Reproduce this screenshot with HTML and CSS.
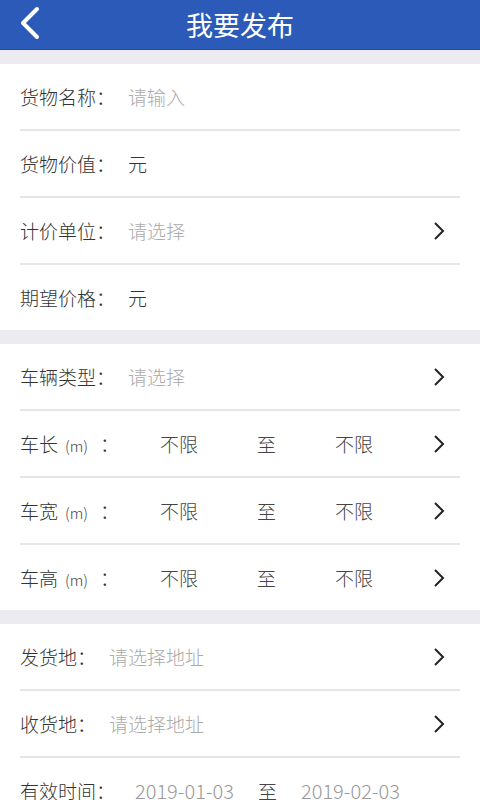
FILE: index.html
```html
<!DOCTYPE html>
<html>
<head>
    <meta charset="utf-8">
    <link rel="stylesheet" href="styles.css">
</head>
<body>
    <div class="header">
        <svg class="back" width="22" height="34" viewBox="0 0 22 34">
            <path d="M18 3 L4 17 L18 31" fill="none" stroke="#fff" stroke-width="4" stroke-linecap="round" stroke-linejoin="round"/>
        </svg>
        <h1>我要发布</h1>
    </div>

    <div class="gap"></div>

    <div class="section">
        <div class="row">
            <span class="label">货物名称：</span>
            <span class="value hint">请输入</span>
        </div>
        <div class="row">
            <span class="label">货物价值：</span>
            <span class="value">元</span>
        </div>
        <div class="row">
            <span class="label">计价单位：</span>
            <span class="value hint">请选择</span>
            <svg class="arrow" width="12" height="20" viewBox="0 0 12 20"><path d="M2 2 L10 10 L2 18" fill="none" stroke="#222" stroke-width="2"/></svg>
        </div>
        <div class="row">
            <span class="label">期望价格：</span>
            <span class="value">元</span>
        </div>
    </div>

    <div class="gap"></div>

    <div class="section">
        <div class="row">
            <span class="label">车辆类型：</span>
            <span class="value hint">请选择</span>
            <svg class="arrow" width="12" height="20" viewBox="0 0 12 20"><path d="M2 2 L10 10 L2 18" fill="none" stroke="#222" stroke-width="2"/></svg>
        </div>
        <div class="row range">
            <span class="label">车长<small>(m)</small>：</span>
            <span class="num">不限</span>
            <span class="to">至</span>
            <span class="num">不限</span>
            <svg class="arrow" width="12" height="20" viewBox="0 0 12 20"><path d="M2 2 L10 10 L2 18" fill="none" stroke="#222" stroke-width="2"/></svg>
        </div>
        <div class="row range">
            <span class="label">车宽<small>(m)</small>：</span>
            <span class="num">不限</span>
            <span class="to">至</span>
            <span class="num">不限</span>
            <svg class="arrow" width="12" height="20" viewBox="0 0 12 20"><path d="M2 2 L10 10 L2 18" fill="none" stroke="#222" stroke-width="2"/></svg>
        </div>
        <div class="row range">
            <span class="label">车高<small>(m)</small>：</span>
            <span class="num">不限</span>
            <span class="to">至</span>
            <span class="num">不限</span>
            <svg class="arrow" width="12" height="20" viewBox="0 0 12 20"><path d="M2 2 L10 10 L2 18" fill="none" stroke="#222" stroke-width="2"/></svg>
        </div>
    </div>

    <div class="gap"></div>

    <div class="section">
        <div class="row">
            <span class="label">发货地：</span>
            <span class="value hint">请选择地址</span>
            <svg class="arrow" width="12" height="20" viewBox="0 0 12 20"><path d="M2 2 L10 10 L2 18" fill="none" stroke="#222" stroke-width="2"/></svg>
        </div>
        <div class="row">
            <span class="label">收货地：</span>
            <span class="value hint">请选择地址</span>
            <svg class="arrow" width="12" height="20" viewBox="0 0 12 20"><path d="M2 2 L10 10 L2 18" fill="none" stroke="#222" stroke-width="2"/></svg>
        </div>
        <div class="row dates">
            <span class="label">有效时间：</span>
            <span class="date">2019-01-03</span>
            <span class="to">至</span>
            <span class="date">2019-02-03</span>
        </div>
    </div>
</body>
</html>
```

FILE: styles.css
```css
body {
    margin: 0;
    background-color: #fff;
    font-family: "Noto Sans CJK SC", "Noto Sans", sans-serif;
    font-weight: 300;
    color: #333;
    overflow: hidden;
}

.header {
    height: 49px;
    background-color: #2b5ab8;
    border-bottom: 1px solid #2148a0;
    display: flex;
    align-items: center;
    justify-content: center;
    position: relative;
}

.header h1 {
    margin: 0;
    font-size: 27px;
    font-weight: normal;
    color: #fff;
    line-height: 1;
}

.back {
    position: absolute;
    left: 19px;
    top: 6px;
}

.gap {
    height: 14px;
    background-color: #ebebf0;
}

.section {
    background-color: #fff;
}

.row {
    height: 65px;
    margin: 0 20px;
    border-bottom: 2px solid #e6e6e6;
    display: flex;
    align-items: center;
    font-size: 19px;
}

.row:last-child {
    border-bottom: none;
}

.label {
    color: #333;
    white-space: nowrap;
}

.label small {
    font-size: 15px;
    color: #444;
    margin: 0 12px 0 7px;
}

.value {
    margin-left: 13px;
    color: #333;
}

.hint {
    color: #aaa;
}

.arrow {
    margin-left: auto;
    margin-right: 15px;
}

.range .label {
    width: 140px;
}

.range .num {
    width: 97px;
    color: #444;
}

.range .num + .to + .num {
    width: auto;
}

.range .to {
    width: 78px;
    color: #444;
}

.dates .label {
    width: 115px;
}

.dates .date {
    color: #999;
    font-size: 20px;
    width: 123px;
}

.dates .to {
    width: 43px;
    color: #444;
}
```
